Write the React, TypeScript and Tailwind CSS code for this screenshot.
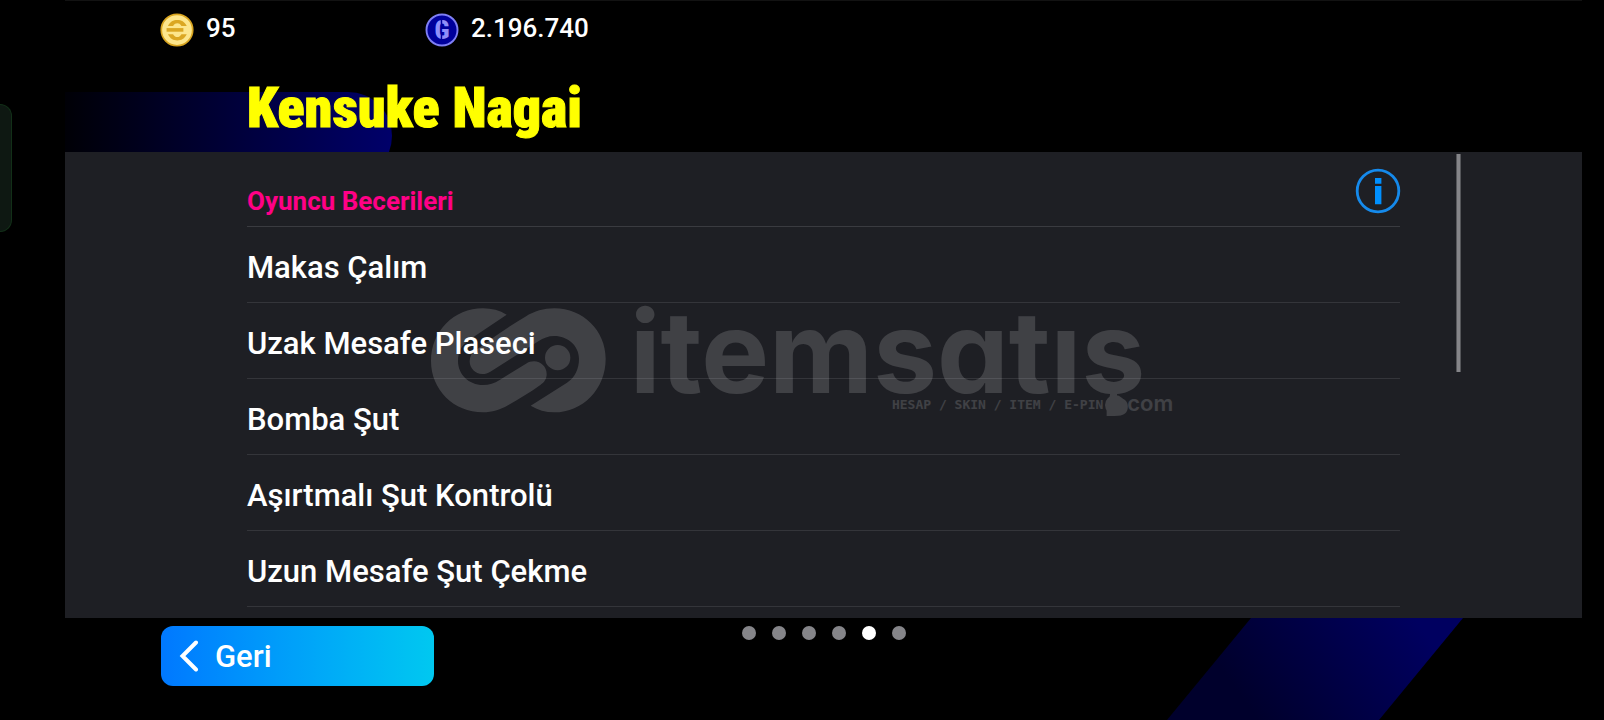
import React from "react";

const skills = [
  "Makas Çalım",
  "Uzak Mesafe Plaseci",
  "Bomba Şut",
  "Aşırtmalı Şut Kontrolü",
  "Uzun Mesafe Şut Çekme",
];

function CoinIcon() {
  return (
    <svg className="size-[34px] shrink-0" viewBox="0 0 32 32" aria-hidden="true">
      <circle cx="16" cy="16" r="14.8" fill="#fde68c" stroke="#d9a520" strokeWidth="1.6" />
      <g fill="#dba722">
        <path d="M7.500 12.2C9.500 8 12.500 6.500 16.300 6.500s6.800 1.500 8.900 5.700h-5C19 10.200 17.800 9.600 16.300 9.600s-2.900.6-4 2.600z" />
        <rect x="6.200" y="14.200" width="15.800" height="3.400" />
        <path d="M7.500 20C9.500 24.200 12.500 25.800 16.300 25.800s6.800-1.600 8.900-5.800h-5c-1.200 2-2.400 2.600-3.900 2.600s-2.900-.6-4-2.600z" />
      </g>
    </svg>
  );
}

function PointIcon() {
  return (
    <svg className="size-[34px] shrink-0" viewBox="0 0 32 32" aria-hidden="true">
      <circle cx="16" cy="16" r="14.600" fill="#00009b" stroke="#7f7ff5" strokeWidth="1.800" />
      <text x="16" y="24.500" textAnchor="middle" fontFamily="Roboto Condensed, Roboto, sans-serif" fontWeight="900" fontSize="24" fill="#8f8ffa">
        G
      </text>
      <path d="M15.500 6.500v6M15.500 20v6" stroke="#00009b" strokeWidth="1.400" />
    </svg>
  );
}

function InfoIcon() {
  return (
    <svg className="size-[46px]" viewBox="0 0 46 46" aria-hidden="true">
      <circle cx="23" cy="23" r="20.800" fill="none" stroke="#158aec" strokeWidth="2.800" />
      <path d="M20 10h6.400v5.800H20zM20 18h6.400v18.200H20z" fill="#0090ff" />
    </svg>
  );
}

function Watermark() {
  return (
    <div className="pointer-events-none absolute inset-0 flex items-center justify-center opacity-15">
      <div className="flex h-[106px] items-start gap-6 text-white">
        <svg className="mt-px h-[105px] w-[175px] shrink-0" viewBox="34 38 525 315" fill="currentColor" aria-hidden="true">
          <path d="M261 58C240 45 216 39 190 39C103 39 34 108 34 197C34 283 102 351 190 351C218 351 240 344 265 330C298 311 331 291 362 269C375 260 381 250 381 236C381 215 364 198 343 198C334 198 327 200 319 205L240 254C224 264 209 269 190 269C147 269 115 237 115 197C115 170 125 150 148 134Z" />
          <path d="M333 331L442 262C466 246 478 220 478 190C478 151 444 122 404 122C385 122 372 128 356 138L212 229C204 234 197 236 188 236C167 236 150 219 150 198C150 184 156 174 168 165C213 131 266 94 317 64C345 47 372 39 404 39C490 39 558 106 558 190C558 281 489 351 404 351C378 351 354 344 333 331Z" />
          <circle cx="414" cy="187" r="38" />
        </svg>
        <div className="flex flex-col items-end font-['Inter',sans-serif] font-semibold">
          <span className="mr-7 h-[89px] text-[114px] leading-[90px] font-bold [font-feature-settings:'cv11']">itemsatış</span>
          <span className="flex h-[18px] items-center gap-0.5">
            <span className="font-['DejaVu_Sans_Mono',monospace] text-[13px] leading-4">HESAP / SKIN / ITEM / E-PIN</span>
            <span className="size-5 rounded-full bg-white" />
            <span className="pb-1 text-[22px] leading-4">com</span>
          </span>
        </div>
      </div>
    </div>
  );
}

export default function App() {
  return (
    <div className="relative flex min-h-screen flex-col overflow-hidden bg-black pr-[22px] pl-[65px] font-['Roboto',sans-serif] font-medium text-white">
      <div className="absolute top-[104px] left-0 h-32 w-3 rounded-r-xl border border-l-0 border-[#123018] bg-[#0e1812]" />

      <header className="relative flex h-[152px] flex-col border-t border-[#121212]">
        <div className="absolute top-[91px] left-0 h-[60px] w-[327px] overflow-hidden">
          <div className="h-[88px] rounded-r-[44px] bg-linear-to-r/srgb from-[#000006] to-[#00006a]" />
        </div>
        <div className="relative flex h-[58px] items-center pl-[95px] text-[26px] leading-none">
          <div className="flex w-[265px] items-center gap-3">
            <CoinIcon />
            <span className="pb-1">95</span>
          </div>
          <div className="flex items-center gap-3">
            <PointIcon />
            <span className="pb-1">2.196.740</span>
          </div>
        </div>
        <h1 className="relative mt-[17px] pl-[182px] font-['Roboto_Condensed','Roboto',sans-serif] text-[56px] leading-[64px] font-black text-[#ffff00] [-webkit-text-stroke:1px_#ffff00]">
          Kensuke Nagai
        </h1>
      </header>

      <main className="relative bg-[#1e1f24] pr-[182px] pb-[11px] pl-[182px]">
        <div className="flex h-[75px] items-center justify-between border-b border-[#3a3b40]">
          <h2 className="pt-6 text-[26px] leading-8 font-bold text-[#ff0086]">Oyuncu Becerileri</h2>
          <button type="button" aria-label="Bilgi" className="-mr-px pt-1">
            <InfoIcon />
          </button>
        </div>
        <ul>
          {skills.map((skill) => (
            <li key={skill} className="flex h-[76px] items-center border-b border-[#34353a] pt-1.5 text-[31px] leading-10">
              {skill}
            </li>
          ))}
        </ul>
        <div className="absolute top-0.5 right-[121px] h-[218px] w-[5px] border-x border-[#55565a] bg-[#858589]" />
      </main>

      <footer className="relative grid grow grid-cols-[1fr_auto_1fr] items-start pt-2 pl-24">
        <svg className="absolute top-0 right-[119px] h-full w-[296px]" viewBox="0 0 296 102" preserveAspectRatio="none" aria-hidden="true">
          <defs>
            <linearGradient id="band" gradientUnits="userSpaceOnUse" x1="90" y1="100" x2="240" y2="-10">
              <stop offset="0" stopColor="#00002c" />
              <stop offset="1" stopColor="#000060" />
            </linearGradient>
          </defs>
          <path d="M84 0H296L212 102H0Z" fill="url(#band)" />
        </svg>
        <button
          type="button"
          className="flex h-[60px] w-[273px] items-center gap-4 rounded-xl bg-linear-to-r from-[#0078ff] to-[#00c8f0] pl-[18px] text-[31px] leading-none"
        >
          <svg className="h-8 w-5" viewBox="0 0 20 32" fill="none" stroke="currentColor" strokeWidth="4" strokeLinecap="round" strokeLinejoin="miter" aria-hidden="true">
            <path d="M17 2.500L3.500 16L17 29.500" />
          </svg>
          Geri
        </button>
        <div className="-ml-24 flex gap-4">
          {[0, 1, 2, 3, 4, 5].map((page) => (
            <span key={page} className={page === 4 ? "size-3.5 rounded-full bg-white" : "size-3.5 rounded-full bg-[#858589]"} />
          ))}
        </div>
      </footer>

      <Watermark />
    </div>
  );
}
